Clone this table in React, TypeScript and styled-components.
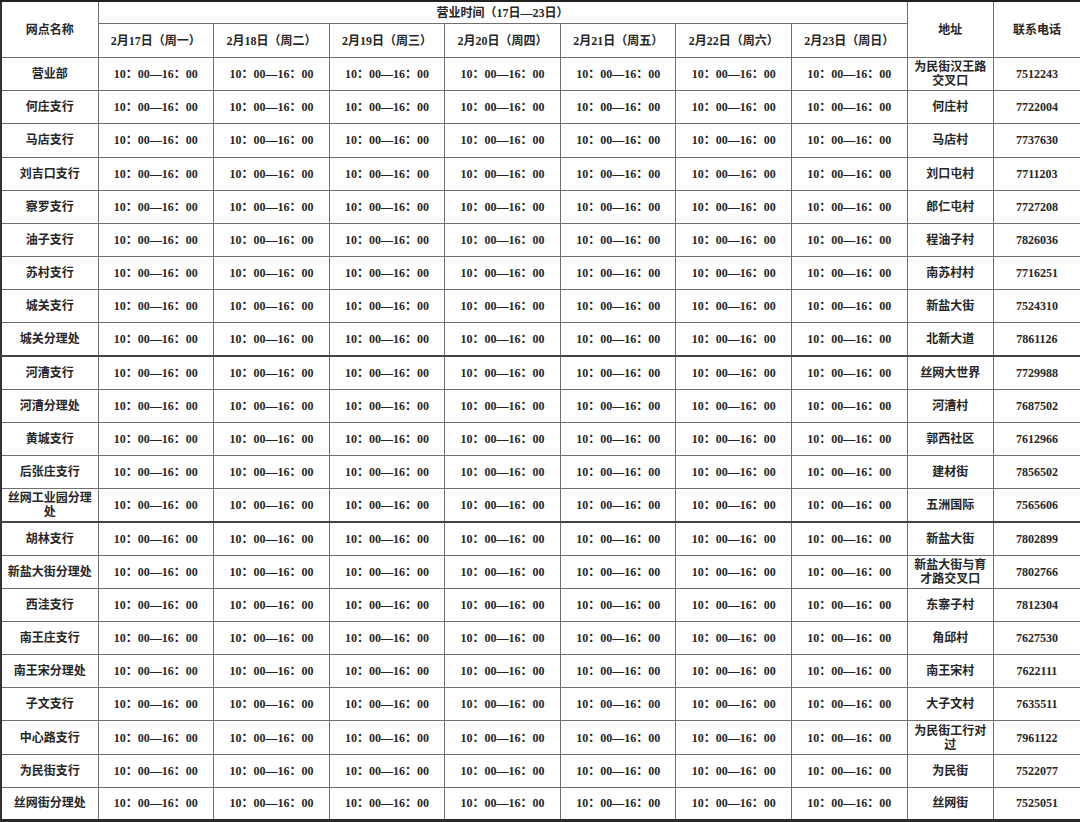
import React from "react";
import styled, { createGlobalStyle } from "styled-components";

const Global = createGlobalStyle`
  html, body { margin: 0; padding: 0; background: #fff; }
  body { width: 1080px; height: 822px; overflow: hidden; }
`;

const Sheet = styled.table`
  width: 1080px;
  height: 822px;
  table-layout: fixed;
  border-collapse: collapse;
  border-top: 2px solid #222;
  border-left: 2px solid #333;
  border-right: 2px solid #333;
  border-bottom: 3px solid #2a2a2a;
  font-family: "Liberation Serif", "Noto Sans CJK SC", serif;
  font-weight: 700;
  font-size: 12px;
  color: #262626;
`;

const HeadCell = styled.th<{ $h?: number }>`
  border: 1px solid #6f6f6f;
  padding: 0 4px;
  font-weight: 700;
  text-align: center;
  vertical-align: middle;
  line-height: 14px;
  height: ${(p) => (p.$h ? `${p.$h}px` : "auto")};
`;

const Row = styled.tr<{ $heavy?: boolean }>`
  height: 33.17px;
  & > td {
    border-bottom: ${(p) => (p.$heavy ? "2px solid #444" : "1px solid #6f6f6f")};
  }
`;

const Cell = styled.td`
  border: 1px solid #6f6f6f;
  padding: 0 4px;
  text-align: center;
  vertical-align: middle;
  line-height: 14px;
  white-space: normal;
  word-break: break-all;
`;

const TimeCell = styled(Cell)`
  white-space: nowrap;
`;

const dates = [
  "2月17日（周一）",
  "2月18日（周二）",
  "2月19日（周三）",
  "2月20日（周四）",
  "2月21日（周五）",
  "2月22日（周六）",
  "2月23日（周日）",
];

const branches: [string, string, string][] = [
  ["营业部", "为民街汉王路交叉口", "7512243"],
  ["何庄支行", "何庄村", "7722004"],
  ["马店支行", "马店村", "7737630"],
  ["刘吉口支行", "刘口屯村", "7711203"],
  ["察罗支行", "郎仁屯村", "7727208"],
  ["油子支行", "程油子村", "7826036"],
  ["苏村支行", "南苏村村", "7716251"],
  ["城关支行", "新盐大街", "7524310"],
  ["城关分理处", "北新大道", "7861126"],
  ["河漕支行", "丝网大世界", "7729988"],
  ["河漕分理处", "河漕村", "7687502"],
  ["黄城支行", "郭西社区", "7612966"],
  ["后张庄支行", "建材街", "7856502"],
  ["丝网工业园分理处", "五洲国际", "7565606"],
  ["胡林支行", "新盐大街", "7802899"],
  ["新盐大街分理处", "新盐大街与育才路交叉口", "7802766"],
  ["西洼支行", "东寨子村", "7812304"],
  ["南王庄支行", "角邱村", "7627530"],
  ["南王宋分理处", "南王宋村", "7622111"],
  ["子文支行", "大子文村", "7635511"],
  ["中心路支行", "为民街工行对过", "7961122"],
  ["为民街支行", "为民街", "7522077"],
  ["丝网街分理处", "丝网街", "7525051"],
];

const heavyRows = new Set([8, 13]);

export default function App() {
  return (
    <>
      <Global />
      <Sheet>
        <colgroup>
          <col style={{ width: 97 }} />
          {dates.map((d) => (
            <col key={d} style={{ width: 115.6 }} />
          ))}
          <col style={{ width: 86 }} />
          <col style={{ width: 88 }} />
        </colgroup>
        <thead>
          <tr>
            <HeadCell rowSpan={2}>网点名称</HeadCell>
            <HeadCell colSpan={7} $h={21}>
              营业时间（17日—23日）
            </HeadCell>
            <HeadCell rowSpan={2}>地址</HeadCell>
            <HeadCell rowSpan={2}>联系电话</HeadCell>
          </tr>
          <tr>
            {dates.map((d) => (
              <HeadCell key={d} $h={33}>
                {d}
              </HeadCell>
            ))}
          </tr>
        </thead>
        <tbody>
          {branches.map(([name, addr, phone], i) => (
            <Row key={name + i} $heavy={heavyRows.has(i)}>
              <Cell>{name}</Cell>
              {dates.map((d) => (
                <TimeCell key={d}>10：00—16：00</TimeCell>
              ))}
              <Cell>{addr}</Cell>
              <Cell>{phone}</Cell>
            </Row>
          ))}
        </tbody>
      </Sheet>
    </>
  );
}
